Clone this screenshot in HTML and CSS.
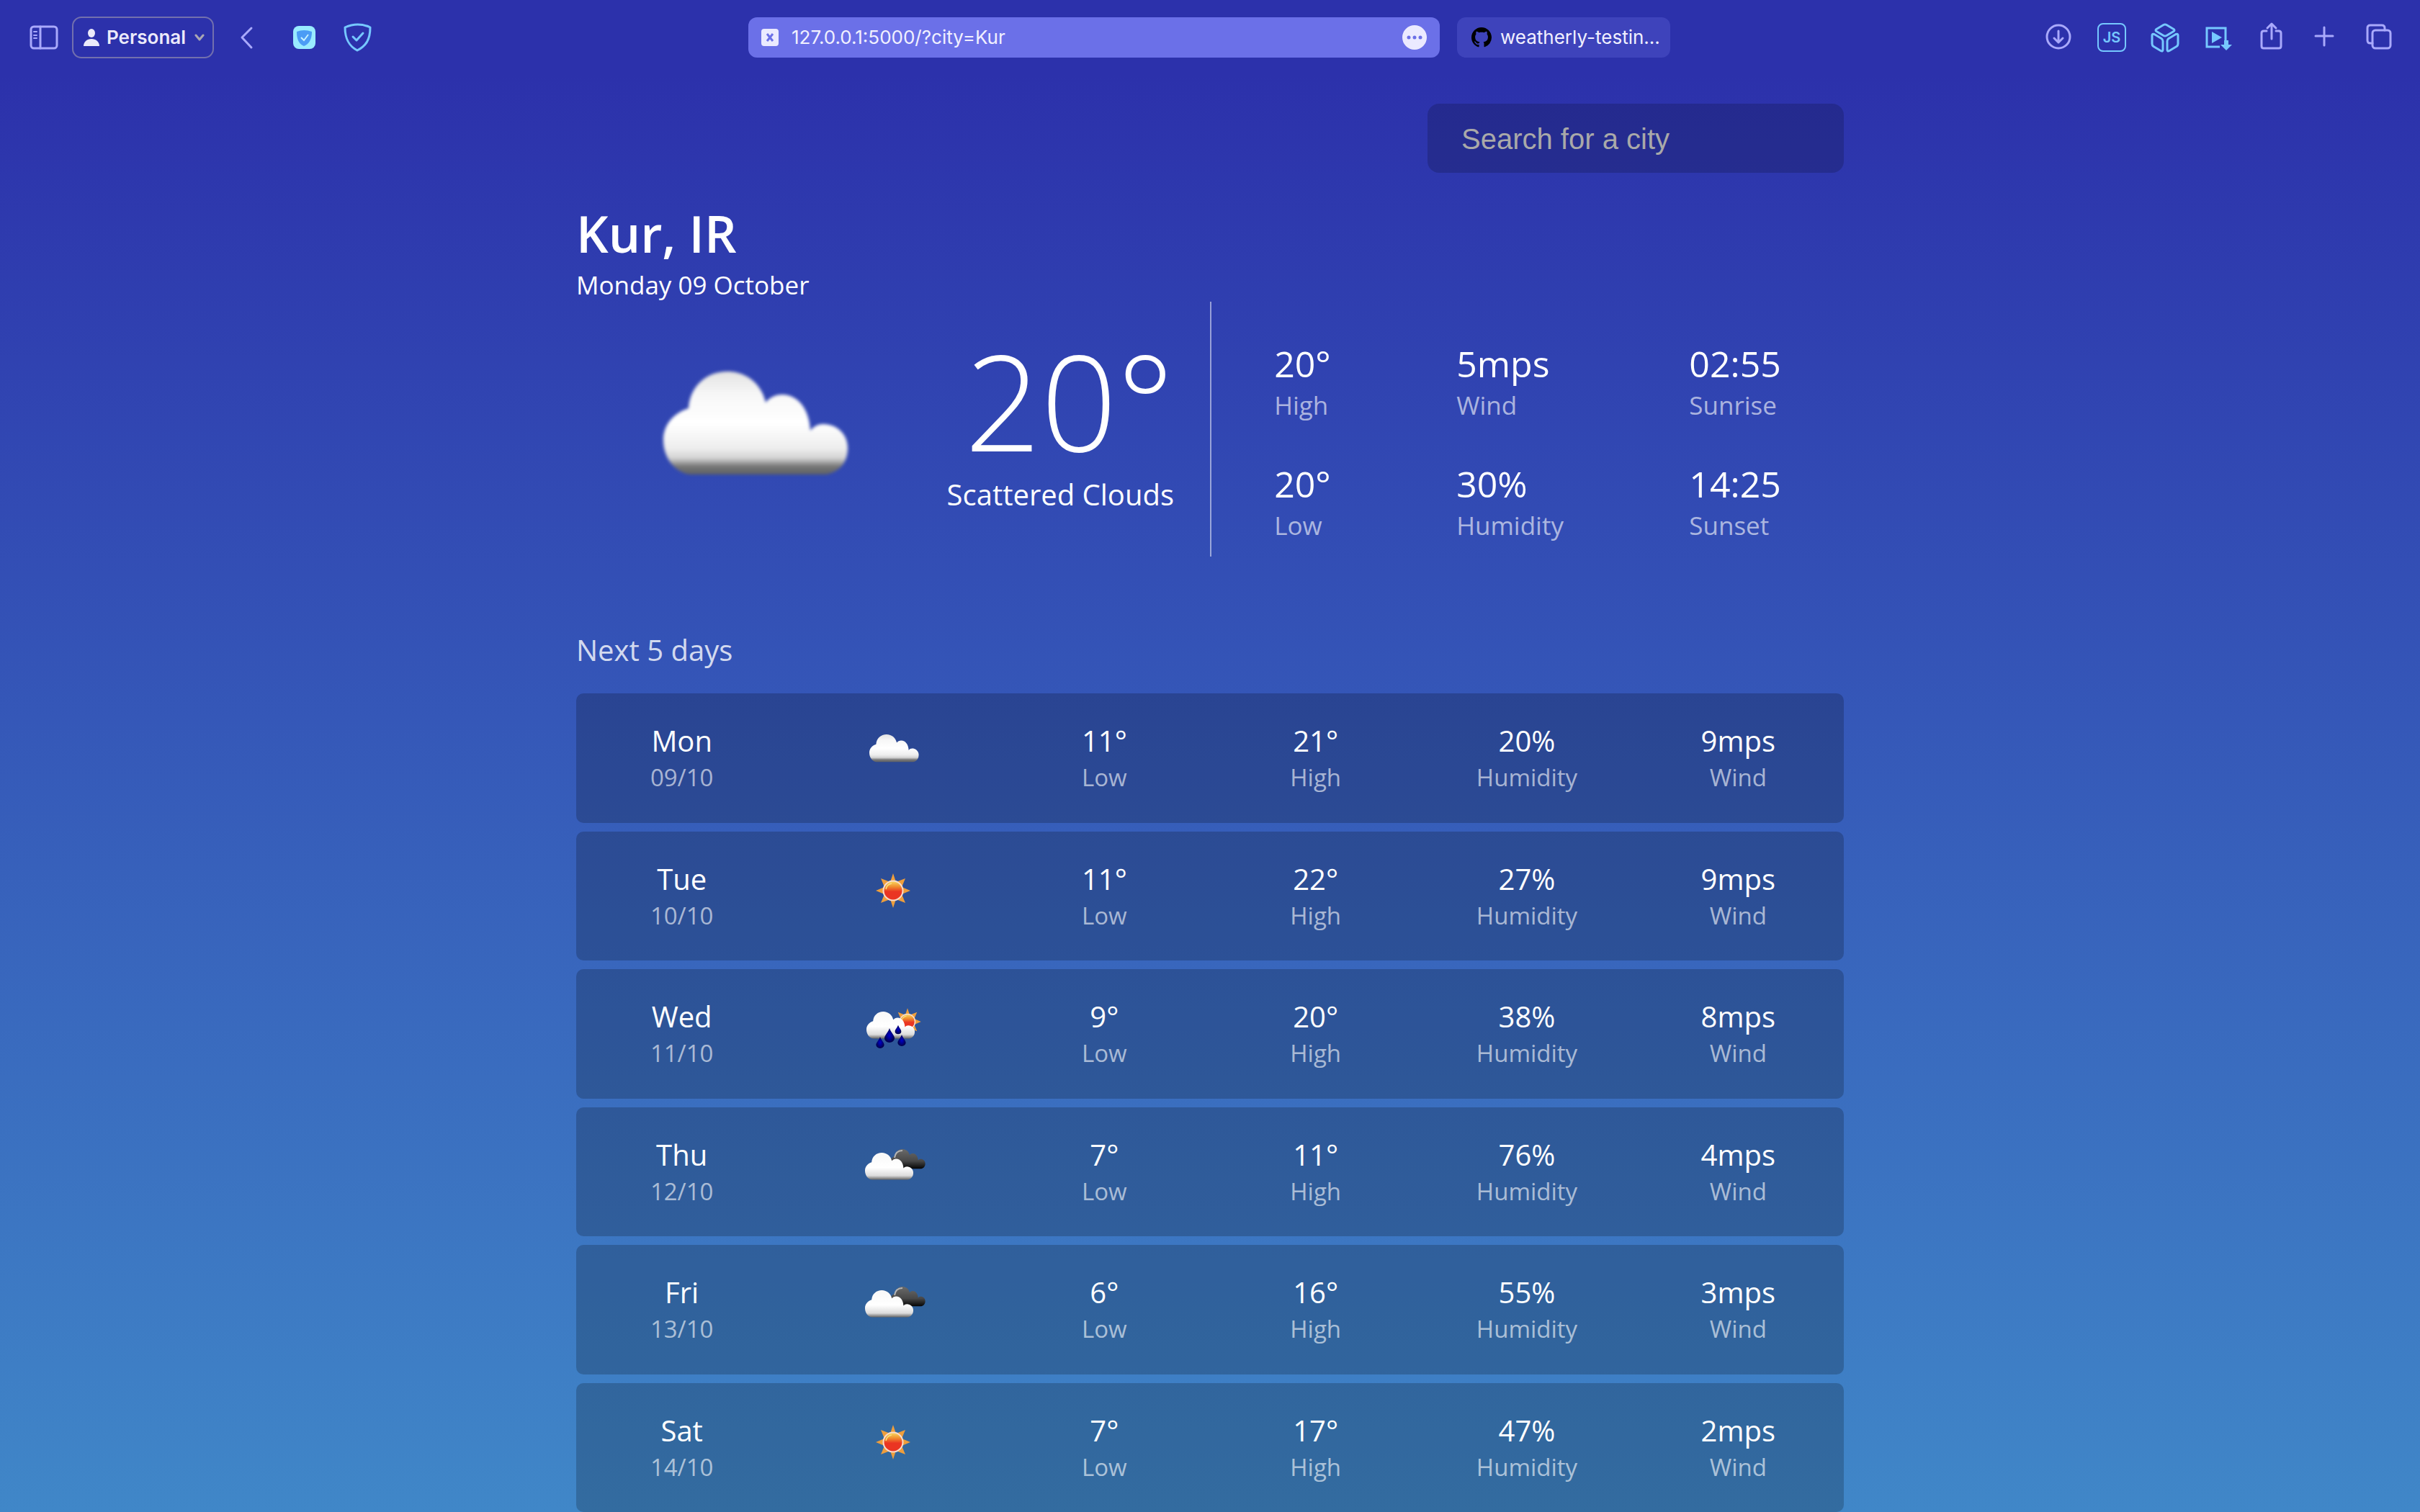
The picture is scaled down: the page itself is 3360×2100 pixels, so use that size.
FILE: index.html
```html
<!DOCTYPE html>
<html lang="en">
<head>
<meta charset="utf-8">
<title>Weatherly</title>
<link rel="stylesheet" href="styles.css">
</head>
<body>
<svg class="defs" aria-hidden="true">
  <defs>
    <linearGradient id="cloud-fill" x1="0" y1="0" x2="0" y2="1">
      <stop offset="0" stop-color="#e2e2e2"/>
      <stop offset=".22" stop-color="#f7f7f7"/>
      <stop offset=".5" stop-color="#ffffff"/>
      <stop offset=".74" stop-color="#eeeeee"/>
      <stop offset=".84" stop-color="#d4d4d4"/>
      <stop offset=".92" stop-color="#777777"/>
      <stop offset="1" stop-color="#5e6064"/>
    </linearGradient>
    <linearGradient id="white-fill" x1="0" y1="0" x2="0" y2="1">
      <stop offset="0" stop-color="#f8f8f8"/>
      <stop offset=".55" stop-color="#ffffff"/>
      <stop offset=".85" stop-color="#dcdcdc"/>
      <stop offset="1" stop-color="#666666"/>
    </linearGradient>
    <linearGradient id="dark-fill" x1="0" y1="0" x2="0" y2="1">
      <stop offset="0" stop-color="#6a6a6a"/>
      <stop offset=".6" stop-color="#484848"/>
      <stop offset="1" stop-color="#050505"/>
    </linearGradient>
    <linearGradient id="sun-fill" x1="0" y1="0" x2="0" y2="1">
      <stop offset="0" stop-color="#f9dc62"/>
      <stop offset=".3" stop-color="#f08c2e"/>
      <stop offset=".55" stop-color="#ea3522"/>
      <stop offset="1" stop-color="#ea3522"/>
    </linearGradient>
    <radialGradient id="drop-fill">
      <stop offset="0" stop-color="#0000cc"/>
      <stop offset="1" stop-color="#00004c"/>
    </radialGradient>
    <path id="cloud" d="M36 143C14 139 0 118 0 95C0 74 14 58 35 51C37 20 60 0 89 0C117 0 137 19 142 43C148 36 155 32 165 32C188 32 203 54 204 82C209 76 215 73 222 73C241 73 256 87 256 106C256 125 246 139 226 143Z"/>
    <path id="drop" d="M0 -10C2 -4 7 0 7 4A7 6 0 0 1 -7 4C-7 0 -2 -4 0 -10Z" fill="url(#drop-fill)"/>
    <g id="sun">
      <path fill="#ee9e3c" d="M0 -24L4 -12L17 -17L12 -5L24 0L12 5L17 17L4 12L0 24L-4 12L-17 17L-12 5L-24 0L-12 -5L-17 -17L-4 -12Z"/>
      <circle r="13.5" fill="url(#sun-fill)" stroke="#f8dccb" stroke-width="2"/>
      <path d="M-10 -2A10 10 0 0 1 -2 -10" fill="none" stroke="#f9e07a" stroke-width="1.5"/>
    </g>
    <filter id="soft"><feGaussianBlur stdDeviation="2"/></filter>
    <symbol id="icon-cloud" viewBox="0 0 100 100">
      <use href="#cloud" transform="translate(17 25) scale(.268)" fill="url(#cloud-fill)"/>
    </symbol>
    <symbol id="icon-sun" viewBox="0 0 100 100">
      <use href="#sun" transform="translate(50 50)"/>
    </symbol>
    <symbol id="icon-rain" viewBox="0 0 100 100">
      <use href="#sun" transform="translate(70 41) scale(.78)"/>
      <use href="#cloud" transform="translate(13 27) scale(.262)" fill="url(#white-fill)"/>
      <use href="#drop" transform="translate(45 60)"/>
      <use href="#drop" transform="translate(57 52) scale(.62)"/>
      <use href="#drop" transform="translate(32 70) scale(.8)"/>
      <use href="#drop" transform="translate(62 67) scale(.8)"/>
    </symbol>
    <symbol id="icon-clouds" viewBox="0 0 100 100">
      <use href="#cloud" transform="translate(46 26) scale(.19)" fill="url(#dark-fill)"/>
      <path d="M52 38C53 31 57 28 63 28" fill="none" stroke="#b4b4b4" stroke-width="2"/>
      <use href="#cloud" transform="translate(11 31) scale(.262)" fill="url(#white-fill)"/>
    </symbol>
  </defs>
</svg>

<header class="toolbar">
  <div class="toolbar-side toolbar-start">
    <button class="tool" aria-label="Sidebar"><svg viewBox="0 0 40 40"><g class="line"><rect x="3" y="5" width="36" height="30" rx="4"/><path d="M16 5V35"/></g><path class="thin" d="M7 12H11M7 17H11M7 21H11"/></svg></button>
    <button class="profile">
      <svg class="person" viewBox="0 0 22 24"><ellipse cx="11" cy="6" rx="5" ry="6"/><path d="M0 24C0 18 5 14 11 14S22 18 22 24Z"/></svg>
      <span>Personal</span>
      <svg class="chevron" viewBox="0 0 14 10"><path d="M2 2L7 8L12 2"/></svg>
    </button>
    <button class="tool back" aria-label="Back"><svg viewBox="0 0 40 40"><path class="line" d="M26 7L13 20L26 34"/></svg></button>
    <div class="extensions">
      <button class="tool" aria-label="Guard"><svg viewBox="0 0 40 40"><rect x="4" y="4" width="31" height="32" rx="8" fill="#99ebff"/><path d="M9 12Q19 8 30 12C30 23 26 29 19 32C12 29 9 23 9 12Z" fill="#4b9cf5"/><path d="M15 20L19 24L25 16" fill="none" stroke="#c8f2ff" stroke-width="2"/></svg></button>
      <button class="tool" aria-label="Shield"><svg viewBox="0 0 40 40"><g class="blue"><path d="M2 6Q20 -2 37 6C37 23 31 32 19 38C8 32 2 23 2 6Z"/><path d="M13 19L18 24L27 14"/></g></svg></button>
    </div>
  </div>
  <div class="tabs">
    <div class="tab tab-active">
      <svg class="site" viewBox="0 0 24 24"><rect width="24" height="24" rx="4" fill="#ebeaff"/><path d="M8 7L16 17M16 7L8 17" stroke="#6b70e8" stroke-width="3"/></svg>
      <input class="address" type="text" aria-label="Address" value="127.0.0.1:5000/?city=Kur">
      <button class="more" aria-label="More"><svg viewBox="0 0 34 34"><circle cx="17" cy="17" r="17" fill="#ebeaff"/><g fill="#6b70e8"><circle cx="9" cy="17" r="2.5"/><circle cx="17" cy="17" r="2.5"/><circle cx="25" cy="17" r="2.5"/></g></svg></button>
    </div>
    <a class="tab tab-second" href="#">
      <svg class="github" viewBox="0 0 16 16"><path d="M8 0C3.58 0 0 3.58 0 8c0 3.54 2.29 6.53 5.47 7.59.4.07.55-.17.55-.38 0-.19-.01-.82-.01-1.49-2.01.37-2.53-.49-2.69-.94-.09-.23-.48-.94-.82-1.13-.28-.15-.68-.52-.01-.53.63-.01 1.08.58 1.23.82.72 1.21 1.87.87 2.33.66.07-.52.28-.87.51-1.07-1.78-.2-3.64-.89-3.64-3.95 0-.87.31-1.59.82-2.15-.08-.2-.36-1.02.08-2.12 0 0 .67-.21 2.2.82.64-.18 1.32-.27 2-.27s1.36.09 2 .27c1.53-1.04 2.2-.82 2.2-.82.44 1.1.16 1.92.08 2.12.51.56.82 1.27.82 2.15 0 3.07-1.87 3.75-3.65 3.95.29.25.54.73.54 1.48 0 1.07-.01 1.93-.01 2.2 0 .21.15.46.55.38A8.01 8.01 0 0 0 16 8c0-4.42-3.58-8-8-8z"/></svg>
      <span>weatherly-testin...</span>
    </a>
  </div>
  <div class="toolbar-side toolbar-end">
    <button class="tool" aria-label="Downloads"><svg viewBox="0 0 40 40"><g class="line"><circle cx="20" cy="19" r="16"/><path d="M20 11V27M14 21L20 27L26 21"/></g></svg></button>
    <button class="tool js" aria-label="JavaScript">JS</button>
    <button class="tool" aria-label="Packages"><svg viewBox="0 0 40 40"><g class="blue"><path d="M18 2.500Q20 1.500 22 2.500L32 8.500Q34 10 32 11.500L22 17.500Q20 18.500 18 17.500L8 11.500Q6 10 8 8.500Z"/><path d="M2 17Q2 14.500 5 15.500L15 21.500Q17 23 17 25V37Q17 40 14 38.500L4 32.500Q2 31 2 29Z"/><path d="M38 17Q38 14.500 35 15.500L25 21.500Q23 23 23 25V37Q23 40 26 38.500L36 32.500Q38 31 38 29Z"/></g></svg></button>
    <button class="tool" aria-label="Video download"><svg viewBox="0 0 40 40"><path d="M22 33H4V7H30V24" fill="none" stroke="#76c8ff" stroke-width="3"/><path d="M11 12L25 20L11 28ZM28 24H34V30H39L31 38L23 30H28Z" fill="#76c8ff"/></svg></button>
    <button class="tool" aria-label="Share"><svg viewBox="0 0 40 40"><g class="line"><path d="M13 11H9Q6 11 6 14V32Q6 35 9 35H30Q33 35 33 32V14Q33 11 30 11H26M20 22V2M14 7L20 1L26 7"/></g></svg></button>
    <button class="tool" aria-label="New tab"><svg viewBox="0 0 40 40"><path class="line" d="M19 6V31M7 18H31"/></svg></button>
    <button class="tool" aria-label="Tab overview"><svg viewBox="0 0 40 40"><g class="line"><rect x="12" y="10" width="25" height="25" rx="4"/><path d="M12 28H9Q5 28 5 24V7Q5 3 9 3H25Q29 3 29 7V10"/></g></svg></button>
  </div>
</header>

<main class="page">
  <form class="search"><input class="search-box" type="search" aria-label="City" placeholder="Search for a city"></form>
  <h1 class="place">Kur, IR</h1>
  <p class="today">Monday 09 October</p>

  <section class="current">
    <div class="summary">
      <svg class="summary-icon" viewBox="0 0 256 142"><use href="#cloud" fill="url(#cloud-fill)" filter="url(#soft)"/></svg>
      <div class="reading">
        <p class="temperature">20°</p>
        <p class="condition">Scattered Clouds</p>
      </div>
    </div>
    <div class="stats">
      <div class="stat-column">
        <div><p class="stat-value">20°</p><p class="stat-label">High</p></div>
        <div><p class="stat-value">20°</p><p class="stat-label">Low</p></div>
      </div>
      <div class="stat-column">
        <div><p class="stat-value">5mps</p><p class="stat-label">Wind</p></div>
        <div><p class="stat-value">30%</p><p class="stat-label">Humidity</p></div>
      </div>
      <div class="stat-column">
        <div><p class="stat-value">02:55</p><p class="stat-label">Sunrise</p></div>
        <div><p class="stat-value">14:25</p><p class="stat-label">Sunset</p></div>
      </div>
    </div>
  </section>

  <h2 class="next">Next 5 days</h2>
  <ul class="forecast">
    <li class="day">
      <div><p class="value">Mon</p><p class="label">09/10</p></div>
      <svg class="day-icon"><use href="#icon-cloud"/></svg>
      <div><p class="value">11°</p><p class="label">Low</p></div>
      <div><p class="value">21°</p><p class="label">High</p></div>
      <div><p class="value">20%</p><p class="label">Humidity</p></div>
      <div><p class="value">9mps</p><p class="label">Wind</p></div>
    </li>
    <li class="day">
      <div><p class="value">Tue</p><p class="label">10/10</p></div>
      <svg class="day-icon"><use href="#icon-sun"/></svg>
      <div><p class="value">11°</p><p class="label">Low</p></div>
      <div><p class="value">22°</p><p class="label">High</p></div>
      <div><p class="value">27%</p><p class="label">Humidity</p></div>
      <div><p class="value">9mps</p><p class="label">Wind</p></div>
    </li>
    <li class="day">
      <div><p class="value">Wed</p><p class="label">11/10</p></div>
      <svg class="day-icon"><use href="#icon-rain"/></svg>
      <div><p class="value">9°</p><p class="label">Low</p></div>
      <div><p class="value">20°</p><p class="label">High</p></div>
      <div><p class="value">38%</p><p class="label">Humidity</p></div>
      <div><p class="value">8mps</p><p class="label">Wind</p></div>
    </li>
    <li class="day">
      <div><p class="value">Thu</p><p class="label">12/10</p></div>
      <svg class="day-icon"><use href="#icon-clouds"/></svg>
      <div><p class="value">7°</p><p class="label">Low</p></div>
      <div><p class="value">11°</p><p class="label">High</p></div>
      <div><p class="value">76%</p><p class="label">Humidity</p></div>
      <div><p class="value">4mps</p><p class="label">Wind</p></div>
    </li>
    <li class="day">
      <div><p class="value">Fri</p><p class="label">13/10</p></div>
      <svg class="day-icon"><use href="#icon-clouds"/></svg>
      <div><p class="value">6°</p><p class="label">Low</p></div>
      <div><p class="value">16°</p><p class="label">High</p></div>
      <div><p class="value">55%</p><p class="label">Humidity</p></div>
      <div><p class="value">3mps</p><p class="label">Wind</p></div>
    </li>
    <li class="day">
      <div><p class="value">Sat</p><p class="label">14/10</p></div>
      <svg class="day-icon"><use href="#icon-sun"/></svg>
      <div><p class="value">7°</p><p class="label">Low</p></div>
      <div><p class="value">17°</p><p class="label">High</p></div>
      <div><p class="value">47%</p><p class="label">Humidity</p></div>
      <div><p class="value">2mps</p><p class="label">Wind</p></div>
    </li>
  </ul>
</main>
</body>
</html>
```
FILE: styles.css
```css
* { box-sizing: border-box; }
body, h1, h2, p, ul { margin: 0; padding: 0; }
body {
  min-height: 100vh;
  display: flex;
  flex-direction: column;
  background: #2c31ab;
  color: #fff;
  font-family: "Open Sans", sans-serif;
}
button, input { border: 0; padding: 0; background: none; color: inherit; font: inherit; outline: 0; }
.defs { position: absolute; width: 0; height: 0; }

/* Browser toolbar */
.toolbar {
  display: grid;
  grid-template-columns: 1fr minmax(0, 1280px) 1fr;
  align-items: center;
  height: 104px;
  padding: 0 38px 0 36px;
  font-family: Inter, sans-serif;
  font-size: 26px;
  line-height: 32px;
}
.toolbar-side { display: flex; align-items: center; gap: 20px; }
.toolbar-start { padding-left: 4px; }
.toolbar-end { justify-content: flex-end; gap: 34px; }
.tool { width: 40px; height: 40px; flex: none; }
.tool svg { display: block; width: 100%; height: 100%; overflow: visible; }
.line { fill: none; stroke: #a9a9fb; stroke-width: 3; stroke-linecap: round; stroke-linejoin: round; }
.thin { stroke: #a9a9fb; stroke-width: 2; stroke-linecap: round; }
.blue { fill: none; stroke: #76c8ff; stroke-width: 3; stroke-linecap: round; stroke-linejoin: round; }
.js { border: 2px solid #76c8ff; border-radius: 8px; color: #76c8ff; font-size: 20px; font-weight: 600; line-height: 20px; }
.profile {
  display: flex;
  align-items: center;
  gap: 10px;
  width: 197px;
  height: 58px;
  padding: 0 11px 0 14px;
  border: 2px solid #7270ae;
  border-radius: 13px;
  color: #ebeafa;
  font-weight: 600;
}
.person { width: 22px; height: 24px; fill: #ebeafa; }
.chevron { width: 14px; height: 10px; margin-left: auto; fill: none; stroke: #aaa7b2; stroke-width: 3; stroke-linecap: round; stroke-linejoin: round; }
.back { margin-left: 6px; }
.extensions { display: flex; gap: 34px; margin-left: 20px; }
.tabs { display: flex; gap: 24px; }
.tab { display: flex; align-items: center; height: 56px; border-radius: 12px; color: #f1f0ff; }
.tab-active { flex: 1; gap: 16px; padding: 0 18px; background: #6b70e8; }
.site { width: 24px; height: 24px; }
.address { flex: 1; min-width: 0; padding-left: 2px; }
.more { width: 34px; height: 34px; }
.more svg { display: block; width: 34px; height: 34px; }
.tab-second { width: 296px; gap: 12px; padding: 0 20px; background: #3e43bb; text-decoration: none; white-space: nowrap; }
.github { width: 28px; height: 28px; flex: none; }

/* Weather page */
.page {
  flex: 1;
  display: flex;
  flex-direction: column;
  padding: 40px max(24px, calc(50% - 880px)) 0;
  background: linear-gradient(#2c31ab, #4087c8);
}
.search { display: flex; justify-content: flex-end; }
.search-box {
  width: 578px;
  height: 96px;
  padding: 2px 47px 0;
  border-radius: 16px;
  background: rgba(0, 0, 0, .17);
  font-family: "Liberation Sans", sans-serif;
  font-size: 40px;
}
.search-box::placeholder { color: #a9a9a9; opacity: 1; }
.place { margin-top: 36px; font-size: 70px; font-weight: 600; line-height: 96px; }
.today { font-size: 35px; line-height: 48px; }
.current { display: grid; grid-template-columns: 1fr 1fr; height: 354px; margin-top: -1px; }
.summary {
  display: flex;
  align-items: center;
  justify-content: flex-end;
  gap: 138px;
  padding: 0 50px 18px 0;
}
.summary-icon { width: 256px; height: 142px; overflow: visible; }
.reading { text-align: right; }
.temperature { font-size: 185px; font-weight: 300; line-height: 192px; }
.condition { margin-top: 8px; font-size: 40px; line-height: 56px; }
.stats {
  display: flex;
  justify-content: space-around;
  padding-top: 52px;
  border-left: 2px solid rgba(255, 255, 255, .5);
}
.stat-column { display: flex; flex-direction: column; gap: 51px; }
.stat-value { font-size: 50px; line-height: 68px; }
.stat-label { color: rgba(255, 255, 255, .6); font-size: 35px; line-height: 48px; }
.label { color: rgba(255, 255, 255, .6); font-size: 33px; line-height: 48px; }
.next { margin: 102px 0 32px; color: rgba(255, 255, 255, .8); font-size: 40px; font-weight: 400; line-height: 56px; }
.forecast { flex: 1; display: grid; grid-auto-rows: 1fr; gap: 12px; list-style: none; }
.day {
  display: grid;
  grid-template-columns: repeat(6, 1fr);
  padding-top: 38px;
  justify-items: center;
  align-items: start;
  border-radius: 10px;
  background: rgba(0, 0, 0, .2);
  text-align: center;
}
.day-icon { width: 100px; height: 100px; margin-top: -6px; }
.value { font-size: 40px; line-height: 55px; }
```
